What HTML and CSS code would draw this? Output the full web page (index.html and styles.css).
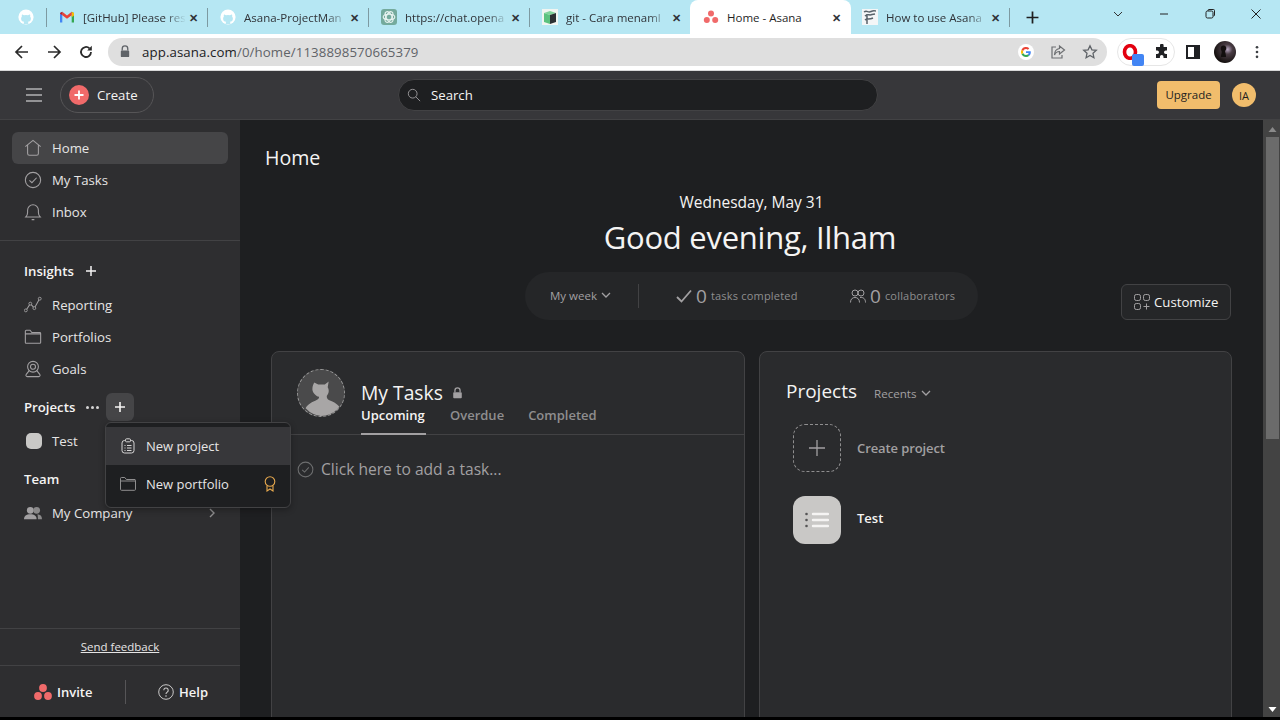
FILE: index.html
```html
<!DOCTYPE html>
<html lang="en">
<head>
  <meta charset="UTF-8">
  <title>Home - Asana</title>
  <link rel="stylesheet" href="styles.css">
</head>
<body>

  <!-- BROWSER TAB STRIP -->
  <div class="tabstrip">
    <div class="tab tab-pinned">
      <svg class="fav" viewBox="0 0 16 16"><circle cx="8" cy="8" r="7.6" fill="#fff"/><path d="M5.6 15c.1-1 .2-1.700.5-2.200-1.800-.2-3-1.100-3-3.300 0-.8.3-1.500.8-2-.1-.3-.3-1 .1-2 0 0 .7-.2 2.100.8a7 7 0 0 1 3.800 0c1.400-1 2.100-.8 2.100-.8.400 1 .2 1.700.1 2 .5.500.8 1.200.8 2 0 2.200-1.200 3.100-3 3.300.3.400.5 1 .5 2.200z" fill="#b6e7f3"/></svg>
    </div>
    <div class="tab">
      <svg class="fav" viewBox="0 0 16 16"><path d="M1 13.500V4l2.300-1.200V13.500z" fill="#4285f4"/><path d="M12.700 13.500V2.800L15 4v9.500z" fill="#34a853"/><path d="M12.700 2.800 15 4v2.500l-2.300 1.700z" fill="#fbbc04"/><path d="M3.300 2.800 8 6.400l4.700-3.600v3.400L8 9.800 3.300 6.200z" fill="#ea4335"/><path d="M1 4 3.300 2.800v3.400L1 4.600z" fill="#c5221f"/></svg>
      <span class="tab-title">[GitHub] Please res</span>
      <span class="tab-x">✕</span>
    </div>
    <div class="tab">
      <svg class="fav" viewBox="0 0 16 16"><circle cx="8" cy="8" r="7.6" fill="#fff"/><path d="M5.6 15c.1-1 .2-1.700.5-2.200-1.800-.2-3-1.100-3-3.300 0-.8.3-1.500.8-2-.1-.3-.3-1 .1-2 0 0 .7-.2 2.100.8a7 7 0 0 1 3.800 0c1.400-1 2.100-.8 2.100-.8.400 1 .2 1.700.1 2 .5.500.8 1.200.8 2 0 2.200-1.200 3.100-3 3.300.3.400.5 1 .5 2.200z" fill="#b6e7f3"/></svg>
      <span class="tab-title">Asana-ProjectMan</span>
      <span class="tab-x">✕</span>
    </div>
    <div class="tab">
      <svg class="fav" viewBox="0 0 16 16"><rect width="16" height="16" rx="3" fill="#74aa9c"/><g fill="none" stroke="#e8f3f0" stroke-width="1.100"><ellipse cx="8" cy="8" rx="5.800" ry="2.800"/><ellipse cx="8" cy="8" rx="5.800" ry="2.800" transform="rotate(60 8 8)"/><ellipse cx="8" cy="8" rx="5.800" ry="2.800" transform="rotate(120 8 8)"/></g></svg>
      <span class="tab-title">https://chat.opena</span>
      <span class="tab-x">✕</span>
    </div>
    <div class="tab">
      <svg class="fav" viewBox="0 0 16 16"><rect width="16" height="16" fill="#f1f5f1"/><path d="M2 4 8 2l6 2-6 2z" fill="#7fd39a"/><path d="M2 4l6 2v9l-6-2z" fill="#5cc27f"/><path d="M14 4 8 6v9l6-2z" fill="#2c3033"/></svg>
      <span class="tab-title">git - Cara menaml</span>
      <span class="tab-x">✕</span>
    </div>
    <div class="tab tab-active">
      <svg class="fav" viewBox="0 0 16 16"><circle cx="8" cy="4.500" r="3" fill="#f06a6a"/><circle cx="3.800" cy="11" r="3" fill="#f06a6a"/><circle cx="12.200" cy="11" r="3" fill="#f06a6a"/></svg>
      <span class="tab-title tab-title-full">Home - Asana</span>
      <span class="tab-x">✕</span>
    </div>
    <div class="tab tab-last">
      <svg class="fav" viewBox="0 0 16 16"><rect width="16" height="16" fill="#f4f6f7"/><path d="M2 3c3-2 4 1 7-.5S13 2 14 2M3 7c3-3 4 0 7-1.500l3-.5M5 5v10M3 11c2-2 4 0 8-2" fill="none" stroke="#59636b" stroke-width="1.500"/></svg>
      <span class="tab-title">How to use Asana</span>
      <span class="tab-x">✕</span>
    </div>
    <svg class="newtab" viewBox="0 0 12 12"><path d="M6 .5v11M.5 6h11" stroke="#1f1f1f" stroke-width="1.600"/></svg>
    <div class="win-btns">
      <svg viewBox="0 0 12 12"><path d="M2 4l4 4 4-4" fill="none" stroke="#333" stroke-width="1"/></svg>
      <svg viewBox="0 0 12 12"><path d="M2 6h8" stroke="#222" stroke-width="1"/></svg>
      <svg viewBox="0 0 12 12"><rect x="2" y="3" width="7" height="7" rx="1.500" fill="none" stroke="#222"/><path d="M4 3V2.500A1 1 0 0 1 5 1.500h4.500a1 1 0 0 1 1 1V7a1 1 0 0 1-1 1" fill="none" stroke="#222"/></svg>
      <svg viewBox="0 0 12 12"><path d="M1.500 1.500l9 9M10.500 1.500l-9 9" stroke="#222" stroke-width="1"/></svg>
    </div>
  </div>

  <!-- BROWSER TOOLBAR -->
  <div class="toolbar">
    <svg class="tool" viewBox="0 0 16 16"><path d="M14 8H2.500M8 2 2 8l6 6" fill="none" stroke="#2b2b2b" stroke-width="1.700"/></svg>
    <svg class="tool" viewBox="0 0 16 16"><path d="M2 8h11.500M8 2l6 6-6 6" fill="none" stroke="#2b2b2b" stroke-width="1.700"/></svg>
    <svg class="tool" viewBox="0 0 16 16"><path d="M13 8a5 5 0 1 1-1.500-3.600" fill="none" stroke="#2b2b2b" stroke-width="1.800"/><path d="M13.800 1.800v4.600H9.200z" fill="#2b2b2b"/></svg>
    <div class="omnibox">
      <svg class="lock" viewBox="0 0 12 14"><path d="M3 6V4a3 3 0 0 1 6 0v2" fill="none" stroke="#5f6368" stroke-width="1.400"/><rect x="1.500" y="6" width="9" height="7" rx="1" fill="#5f6368"/></svg>
      <span class="url"><b>app.asana.com</b>/0/home/1138898570665379</span>
      <svg class="omni-icon" viewBox="0 0 16 16"><circle cx="8" cy="8" r="8" fill="#fff"/><path d="M12.800 8.200c0-.4 0-.7-.1-1H8v1.900h2.700c-.1.600-.5 1.200-1 1.500l1.600 1.200c1-.9 1.500-2.200 1.500-3.600z" fill="#4285f4"/><path d="M8 13c1.300 0 2.400-.4 3.300-1.200l-1.600-1.200c-.5.300-1 .5-1.700.5-1.300 0-2.400-.9-2.800-2L3.500 10.300C4.300 11.900 6 13 8 13z" fill="#34a853"/><path d="M5.200 9.100a3 3 0 0 1 0-2.200L3.500 5.700a5 5 0 0 0 0 4.600z" fill="#fbbc04"/><path d="M8 5c.7 0 1.400.3 1.900.7l1.400-1.400A5 5 0 0 0 3.500 5.700l1.700 1.200C5.600 5.800 6.700 5 8 5z" fill="#ea4335"/></svg>
      <svg class="omni-icon" viewBox="0 0 16 16"><path d="M6 3H2v11h10v-3" fill="none" stroke="#6d6f72" stroke-width="1.200"/><path d="M9.500 2l5 4-5 4V7.500C7 7.500 5.500 8.500 4.500 11c0-4 2-6 5-6.500z" fill="none" stroke="#6d6f72" stroke-width="1.200"/></svg>
      <svg class="omni-icon" viewBox="0 0 16 16"><path d="M8 1.800l1.900 4 4.400.5-3.300 3 .9 4.400L8 11.500l-3.900 2.200.9-4.400-3.300-3 4.400-.5z" fill="none" stroke="#5f6368" stroke-width="1.300"/></svg>
    </div>
    <div class="ext-group">
      <span class="ext-opera">
        <svg viewBox="0 0 16 16"><ellipse cx="8" cy="8" rx="5.500" ry="6.300" fill="#fff" stroke="#e3000f" stroke-width="3.600"/></svg>
        <span class="ext-badge"></span>
      </span>
      <svg class="ext-puzzle" viewBox="0 0 16 16"><path d="M6 1.500a1.800 1.800 0 0 1 3.600 0V3H13v3.400h-1.200a1.800 1.800 0 0 0 0 3.600H13v4H9.500v-1.200a1.800 1.800 0 0 0-3.600 0V14H2v-4h1.200a1.800 1.800 0 0 0 0-3.600H2V3h4z" fill="#202124"/></svg>
    </div>
    <svg class="side-panel" viewBox="0 0 14 14"><path d="M1 1h12v12H1z" fill="none" stroke="#202124" stroke-width="2"/><rect x="8" y="1" width="5" height="12" fill="#202124"/></svg>
    <svg class="profile" viewBox="0 0 22 22">
      <defs><radialGradient id="profileGlow" cx=".62" cy=".38" r=".62"><stop offset="0" stop-color="#b9a9c4"/><stop offset=".35" stop-color="#4a3d45"/><stop offset="1" stop-color="#15100f"/></radialGradient></defs>
      <circle cx="11" cy="11" r="11" fill="url(#profileGlow)"/>
      <path d="M7 6c1-2 4-2 5 0 .7 1.500 0 3-1 4 0 1.500 1 3 1 6H7c0-3 1-4 .5-6C6.800 9 6.500 7 7 6z" fill="#120e0e"/>
    </svg>
    <svg class="kebab" viewBox="0 0 4 16"><circle cx="2" cy="2.500" r="1.500"/><circle cx="2" cy="8" r="1.500"/><circle cx="2" cy="13.500" r="1.500"/></svg>
  </div>

  <!-- ASANA TOP BAR -->
  <header class="topbar">
    <svg class="burger" viewBox="0 0 16 14"><path d="M0 1h16M0 7h16M0 13h16" stroke="#f0f0f0" stroke-width="1"/></svg>
    <div class="create-btn">
      <span class="create-dot"><svg viewBox="0 0 10 10"><path d="M5 .5v9M.5 5h9" stroke="#fff" stroke-width="1.800"/></svg></span>
      Create
    </div>
    <div class="search">
      <svg viewBox="0 0 16 16"><circle cx="6.500" cy="6.500" r="5" fill="none" stroke="#a2a0a2" stroke-width="1"/><path d="M10 10l5 5" stroke="#a2a0a2" stroke-width="1"/></svg>
      Search
    </div>
    <div class="upgrade">Upgrade</div>
    <div class="avatar-ia">IA</div>
  </header>

  <div class="app">
    <!-- SIDEBAR -->
    <aside class="sidebar">
      <nav class="nav-top">
        <div class="nav-row nav-active">
          <svg class="nav-icon" viewBox="0 0 20 20"><path d="M1.500 8.500 10 1.500l8.500 7M4 7v9a2 2 0 0 0 2 2h8a2 2 0 0 0 2-2V7" fill="none" stroke="#a2a0a2" stroke-width="1.200"/></svg>
          Home
        </div>
        <div class="nav-row">
          <svg class="nav-icon" viewBox="0 0 20 20"><circle cx="10" cy="10" r="8.500" fill="none" stroke="#a2a0a2" stroke-width="1.200"/><path d="M6 10.300l2.800 2.700L14 7.500" fill="none" stroke="#a2a0a2" stroke-width="1.200"/></svg>
          My Tasks
        </div>
        <div class="nav-row">
          <svg class="nav-icon" viewBox="0 0 20 20"><path d="M2 15.500c1.500-1.500 2-3 2-5V8a6 6 0 0 1 12 0v2.500c0 2 .5 3.500 2 5zM8.500 18.500h3" fill="none" stroke="#a2a0a2" stroke-width="1.200"/></svg>
          Inbox
        </div>
      </nav>

      <div class="nav-section">
        <div class="nav-head">
          <span>Insights</span>
          <svg class="head-plus" viewBox="0 0 10 10"><path d="M5 0v10M0 5h10" stroke="#f5f4f3" stroke-width="1.500"/></svg>
        </div>
        <div class="nav-row">
          <svg class="nav-icon" viewBox="0 0 20 20"><path d="M2.500 15.500 7 8.500l4.500 5 5.500-10" fill="none" stroke="#a2a0a2" stroke-width="1.200"/><circle cx="2" cy="16" r="1.600" fill="#2e2e30" stroke="#a2a0a2"/><circle cx="7" cy="8.500" r="1.600" fill="#2e2e30" stroke="#a2a0a2"/><circle cx="11.500" cy="13.500" r="1.600" fill="#2e2e30" stroke="#a2a0a2"/><circle cx="17.500" cy="3" r="1.600" fill="#2e2e30" stroke="#a2a0a2"/></svg>
          Reporting
        </div>
        <div class="nav-row">
          <svg class="nav-icon" viewBox="0 0 20 20"><path d="M1.500 3.500a1 1 0 0 1 1-1h4.200l2 2.500H17.500a1 1 0 0 1 1 1V16a1 1 0 0 1-1 1h-15a1 1 0 0 1-1-1zM1.500 6.500h17" fill="none" stroke="#a2a0a2" stroke-width="1.200"/></svg>
          Portfolios
        </div>
        <div class="nav-row">
          <svg class="nav-icon" viewBox="0 0 20 20"><circle cx="10" cy="7.500" r="6" fill="none" stroke="#a2a0a2" stroke-width="1.200"/><circle cx="10" cy="7.500" r="2.800" fill="none" stroke="#a2a0a2" stroke-width="1.200"/><path d="M6 11.500 2.500 16a1.500 1.500 0 0 0 1.200 2.500h12.600a1.500 1.500 0 0 0 1.200-2.500L14 11.500" fill="none" stroke="#a2a0a2" stroke-width="1.200"/></svg>
          Goals
        </div>
      </div>

      <div class="nav-head nav-head-projects">
        <span>Projects</span>
        <span class="dots"><i></i><i></i><i></i></span>
        <span class="plus-box"><svg viewBox="0 0 10 10"><path d="M5 0v10M0 5h10" stroke="#f5f4f3" stroke-width="1.600"/></svg></span>
        <!-- dropdown -->
        <div class="menu">
          <div class="menu-item menu-hover">
            <svg class="menu-icon" viewBox="0 0 16 16"><rect x="2" y="2.500" width="12" height="12.500" rx="2.500" fill="none" stroke="#d5d4d4" stroke-width="1"/><rect x="5.500" y=".8" width="5" height="3" rx="1" fill="#37373a" stroke="#d5d4d4" stroke-width="1"/><path d="M4.500 7.500h1M7 7.500h4.500M4.500 10h1M7 10h4.500M4.500 12.500h1M7 12.500h4.500" stroke="#d5d4d4" stroke-width="1"/></svg>
            New project
          </div>
          <div class="menu-item">
            <svg class="menu-icon" viewBox="0 0 16 16"><path d="M.5 2.500a1 1 0 0 1 1-1h3.300l1.600 2h8.600a.8.800 0 0 1 .5.800v9a1 1 0 0 1-1 1H1.500a1 1 0 0 1-1-1zM.5 5h15" fill="none" stroke="#8f8e8f" stroke-width="1"/></svg>
            New portfolio
            <svg class="menu-award" viewBox="0 0 12 16"><circle cx="6" cy="5.500" r="4.800" fill="none" stroke="#e8a94e" stroke-width="1.100"/><path d="M3 9.500V15l3-2 3 2V9.500" fill="none" stroke="#e8a94e" stroke-width="1.100"/></svg>
          </div>
        </div>
      </div>
      <div class="nav-row">
        <span class="swatch"></span>
        Test
      </div>

      <div class="nav-head nav-head-team"><span>Team</span></div>
      <div class="nav-row">
        <svg class="nav-icon" viewBox="0 0 20 20"><circle cx="7" cy="7" r="3.800" fill="#a2a0a2"/><circle cx="14" cy="7" r="3.800" fill="#8a898a"/><path d="M0 17c0-3.500 2.500-5.500 7-5.500s7 2 7 5.500z" fill="#a2a0a2"/><path d="M15 11.500c3 .2 5 2 5 5.500h-4.500c0-2-.2-3.800-.5-5.500z" fill="#8a898a"/></svg>
        My Company
        <svg class="chev" viewBox="0 0 8 12"><path d="M2 2l4 4-4 4" fill="none" stroke="#8f8e8f" stroke-width="1.400"/></svg>
      </div>

      <div class="side-foot">
        <div class="feedback"><a>Send feedback</a></div>
        <div class="foot-btns">
          <div class="foot-btn foot-invite">
            <svg viewBox="0 0 18 16"><circle cx="9" cy="4" r="3.900" fill="#f06a6a"/><circle cx="4" cy="12" r="3.900" fill="#f06a6a"/><circle cx="14" cy="12" r="3.900" fill="#f06a6a"/></svg>
            Invite
          </div>
          <div class="foot-btn foot-help">
            <svg viewBox="0 0 16 16"><circle cx="8" cy="8" r="7.300" fill="none" stroke="#c9c8c8" stroke-width="1"/><path d="M5.800 6.200a2.200 2.200 0 1 1 3.400 1.900c-.8.500-1.200.9-1.200 1.900" fill="none" stroke="#c9c8c8" stroke-width="1.100"/><circle cx="8" cy="12" r=".8" fill="#c9c8c8"/></svg>
            Help
          </div>
        </div>
      </div>
    </aside>

    <!-- MAIN -->
    <main class="main">
      <div class="main-scroll">
        <h2 class="page-title">Home</h2>
        <div class="date">Wednesday, May 31</div>
        <h1 class="greeting">Good evening, Ilham</h1>

        <div class="stats-row">
          <div class="stats">
            <span class="stats-week">My week
              <svg viewBox="0 0 10 6"><path d="M1 1l4 4 4-4" fill="none" stroke="#a2a0a2" stroke-width="1.300"/></svg>
            </span>
            <span class="stats-div"></span>
            <span class="stat stat-tasks">
              <svg viewBox="0 0 16 14"><path d="M1 8l4.500 4.500L15 1.500" fill="none" stroke="#a2a0a2" stroke-width="1.800"/></svg>
              <b>0</b><small>tasks completed</small>
            </span>
            <span class="stat stat-coll">
              <svg viewBox="0 0 16 14"><circle cx="5" cy="4" r="3" fill="none" stroke="#a2a0a2"/><circle cx="11" cy="4" r="3" fill="none" stroke="#a2a0a2"/><path d="M.5 13.500c0-3.500 2-5 4.500-5s4.500 1.500 4.500 5M10 8.500c3.500-.5 5.500 1.500 5.500 5" fill="none" stroke="#a2a0a2"/></svg>
              <b>0</b><small>collaborators</small>
            </span>
          </div>
          <div class="customize">
            <svg viewBox="0 0 16 16"><rect x=".5" y=".5" width="6" height="6" rx="1.800" fill="none" stroke="#a2a0a2"/><rect x="9.500" y=".5" width="6" height="6" rx="1.800" fill="none" stroke="#a2a0a2"/><rect x=".5" y="9.500" width="6" height="6" rx="1.800" fill="none" stroke="#a2a0a2"/><path d="M12.500 9.500v6M9.500 12.500h6" stroke="#a2a0a2"/></svg>
            Customize
          </div>
        </div>

        <div class="cards">
          <section class="card">
            <div class="tasks-head">
              <div class="user-pic">
                <svg viewBox="0 0 48 48"><path d="M17 13l4 2h7l4-3-1 6c2 3 1 7-1 9 0 3 1 4 4 5 5 2 9 5 10 8a24 24 0 0 1-36 0c1-3 5-6 10-8 3-1 4-2 4-4-4-1-7-5-7-8 0-3 1-6 3-8z" fill="#a8a6a6"/></svg>
              </div>
              <div class="tasks-titles">
                <div class="tasks-title">My Tasks
                  <svg viewBox="0 0 12 14"><path d="M3 6V4a3 3 0 0 1 6 0v2" fill="none" stroke="#a2a0a2" stroke-width="1.500"/><rect x="1" y="6" width="10" height="7" rx="1" fill="#a2a0a2"/></svg>
                </div>
                <div class="tasks-tabs">
                  <span class="tasks-tab tasks-tab-on">Upcoming</span>
                  <span class="tasks-tab">Overdue</span>
                  <span class="tasks-tab">Completed</span>
                </div>
              </div>
            </div>
            <div class="add-task">
              <svg viewBox="0 0 18 18"><circle cx="9" cy="9" r="7.800" fill="none" stroke="#6d6e6f" stroke-width="1.100"/><path d="M5.500 9.300 8 11.700l4.500-5" fill="none" stroke="#6d6e6f" stroke-width="1.100"/></svg>
              Click here to add a task...
            </div>
          </section>

          <section class="card card-projects">
            <div class="proj-head">
              <span class="proj-title">Projects</span>
              <span class="proj-filter">Recents
                <svg viewBox="0 0 10 6"><path d="M1 1l4 4 4-4" fill="none" stroke="#a2a0a2" stroke-width="1.300"/></svg>
              </span>
            </div>
            <div class="proj-row">
              <span class="proj-new"><svg viewBox="0 0 16 16"><path d="M8 0v16M0 8h16" stroke="#a2a0a2" stroke-width="1.300"/></svg></span>
              <span class="proj-create">Create project</span>
            </div>
            <div class="proj-row">
              <span class="proj-tile">
                <svg viewBox="0 0 24 16"><g fill="#555"><circle cx="1.500" cy="2" r="1.300"/><circle cx="1.500" cy="8" r="1.300"/><circle cx="1.500" cy="14" r="1.300"/></g><path d="M8 2h15M8 8h15M8 14h15" stroke="#f5f4f3" stroke-width="2.400" stroke-linecap="round"/></svg>
              </span>
              <span class="proj-name">Test</span>
            </div>
          </section>
        </div>
      </div>

      <div class="scrollbar">
        <svg class="scroll-arrow" viewBox="0 0 8 5"><path d="M4 0l4 5H0z" fill="#8a8a8a"/></svg>
        <div class="scroll-thumb"></div>
        <svg class="scroll-arrow scroll-arrow-down" viewBox="0 0 8 5"><path d="M4 5l4-5H0z" fill="#fff"/></svg>
      </div>
    </main>
  </div>

</body>
</html>
```

FILE: styles.css
```css
* { box-sizing:border-box; }
html, body { margin:0; height:100%; }
body {
  width:1280px; height:720px; overflow:hidden;
  display:flex; flex-direction:column; background:#000;
  font-family:'Open Sans','Noto Sans',sans-serif; color:#f5f4f3;
}
svg { display:block; flex:none; }

/* Browser tabs */
.tabstrip {
  height:34px; background:#b6e7f3; display:flex; align-items:center;
  padding-left:6px; flex:none;
}
.tab {
  width:161px; height:34px; display:flex; align-items:center; position:relative;
  padding-left:12px; padding-right:8px; font-size:11.5px; color:#303338;
}
.tab::after {
  content:''; position:absolute; right:0; top:8px; height:19px; width:1px; background:#7d9aa1;
}
.tab-pinned { width:41px; }
.tab-active {
  background:#fff; border-radius:8px 8px 0 0; padding-left:13px; margin-left:-1px;
  color:#1f1f1f;
}
.tab-active::after { display:none; }
.tab-last { width:159px; padding-left:11px; }
.fav { width:16px; height:16px; margin-right:8px; }
.tab-title {
  flex:1; min-width:0; white-space:nowrap;
  -webkit-mask-image:linear-gradient(90deg,#000 80%,transparent 100%);
  mask-image:linear-gradient(90deg,#000 80%,transparent 100%);
}
.tab-title-full { -webkit-mask-image:none; mask-image:none; }
.tab-x { width:14px; font-size:11px; font-weight:700; text-align:center; color:#2f3337; }
.newtab { width:13px; height:13px; margin-left:16px; }
.win-btns { margin-left:auto; display:flex; align-items:center; margin-right:18px; gap:34px; margin-top:-6px; }
.win-btns svg { width:12px; height:12px; }

/* Browser toolbar */
.toolbar {
  height:37px; background:#fff; display:flex; align-items:center; flex:none;
  padding:0 0 1px 14px; border-bottom:1px solid #d8d8d8;
}
.tool { width:16px; height:16px; margin-right:16px; }
.omnibox {
  width:999px; height:28px; margin-left:-2px; background:#dfdfdf; border-radius:14px;
  display:flex; align-items:center; padding:0 9px 0 11px; color:#5f6368;
}
.lock { width:12px; height:13px; margin-right:11px; }
.url { flex:1; font-size:13.25px; letter-spacing:.1px; }
.url b { font-weight:400; color:#202124; }
.omni-icon { width:16px; height:16px; margin-left:16px; }
.ext-group {
  width:58px; height:28px; border:1px solid #e6e6e6; border-radius:14px; margin-left:10px;
  display:flex; align-items:center; padding-left:4px; gap:16px;
}
.ext-opera { position:relative; width:16px; height:16px; }
.ext-opera svg { width:16px; height:16px; }
.ext-badge { position:absolute; right:-6px; bottom:-6px; width:12px; height:12px; background:#4285f4; border-radius:2px; }
.ext-puzzle { width:16px; height:16px; }
.side-panel { width:14px; height:14px; margin-left:11px; }
.profile { width:22px; height:22px; margin-left:14px; }
.kebab { width:4px; height:14px; fill:#3c3f43; margin-left:19px; }

/* Asana top bar */
.topbar {
  height:49px; background:#37373a; border-bottom:1px solid #424244; display:flex; align-items:center; flex:none;
  padding:0 24px 0 26px;
}
.burger { width:16px; height:14px; }
.create-btn {
  margin-left:18px; width:94px; height:36px; border:1px solid #565557; border-radius:18px;
  display:flex; align-items:center; font-size:13.2px; padding-left:8px; gap:8px;
}
.create-dot {
  width:20px; height:20px; border-radius:50%; background:#f06a6a;
  display:flex; align-items:center; justify-content:center;
}
.create-dot svg { width:10px; height:10px; }
.search {
  margin-left:244px; width:480px; height:32px; background:#1e1f21; border:1px solid #424244;
  border-radius:16px; display:flex; align-items:center; padding-left:8px; font-size:13.2px; gap:10px;
}
.search svg { width:14px; height:14px; }
.upgrade {
  margin-left:auto; width:63px; height:28px; padding-bottom:1px; background:#f1bd6c; border-radius:4px; color:#1e1f21;
  font-size:11.5px; display:flex; align-items:center; justify-content:center;
}
.avatar-ia {
  margin-left:12px; width:24px; height:24px; border-radius:50%; background:#f1bd6c; color:#1e1f21;
  font-size:11px; display:flex; align-items:center; justify-content:center;
}

/* Layout */
.app { flex:1; min-height:0; display:flex; margin-bottom:3px; }

/* Sidebar */
.sidebar {
  width:240px; flex:none; background:#2e2e30;
  display:flex; flex-direction:column; font-size:13.2px;
}
.nav-top { padding:12px; border-bottom:1px solid #424244; }
.nav-row {
  height:32px; display:flex; align-items:center; gap:10px; padding:0 0 1px 12px;
  margin:0 12px; color:#e6e5e5; border-radius:6px; position:relative;
}
.nav-top .nav-row { margin:0; }
.nav-active { background:#454547; }
.nav-icon { width:18px; height:18px; margin-top:1px; }
.nav-section { padding-top:14px; }
.nav-head {
  height:32px; display:flex; align-items:center; padding:0 0 1px 24px; font-weight:600;
  color:#f5f4f3; position:relative;
}
.nav-section .nav-head { margin-bottom:2px; }
.head-plus { width:10px; height:10px; margin-left:12px; margin-top:1px; }
.nav-head-projects { margin-top:8px; margin-bottom:4px; height:28px; padding-bottom:0; }
.nav-head-team { margin-top:6px; margin-bottom:2px; }
.dots { display:flex; gap:2px; margin-left:11px; }
.dots i { width:3px; height:3px; border-radius:50%; background:#d5d4d4; }
.plus-box {
  width:28px; height:28px; margin-left:7px; border-radius:6px; background:#454547;
  display:flex; align-items:center; justify-content:center;
}
.plus-box svg { width:10px; height:10px; }
.swatch { width:16px; height:16px; border-radius:5px; background:#c9c8c6; margin:1px 0 0 2px; }
.chev { width:8px; height:12px; position:absolute; right:12px; top:10px; }

/* Dropdown */
.menu {
  position:absolute; left:105px; top:29px; width:186px; height:86px; z-index:5;
  background:#1e1f21; border:1px solid #424244; border-radius:6px; padding-top:4px;
  font-weight:400; font-size:13px; box-shadow:0 2px 6px rgba(0,0,0,.3);
}
.menu-item { height:38px; display:flex; align-items:center; padding:0 0 1px 14px; gap:10px; color:#e6e5e5; position:relative; }
.menu-hover { background:#37373a; }
.menu-icon { width:16px; height:16px; }
.menu-award { width:12px; height:16px; position:absolute; right:14px; top:11px; }

.side-foot { margin-top:auto; }
.feedback {
  height:38px; padding-bottom:2px; border-top:1px solid #424244; border-bottom:1px solid #424244;
  display:flex; align-items:center; justify-content:center; font-size:11.5px; color:#e6e5e5;
}
.feedback a { text-decoration:underline; }
.foot-btns { height:51px; display:flex; align-items:center; font-weight:600; font-size:13px; }
.foot-btn { height:24px; display:flex; align-items:center; gap:5px; }
.foot-invite { width:126px; padding-left:34px; border-right:1px solid #565557; }
.foot-invite svg { width:18px; height:16px; }
.foot-help { padding-left:32px; }
.foot-help svg { width:16px; height:16px; }

/* Main */
.main { flex:1; min-width:0; background:#1e1f21; display:flex; overflow:hidden; }
.main-scroll { flex:1; min-width:0; padding:0 31px; position:relative; }
.page-title { margin:25px 0 0 -6px; font-size:19.6px; font-weight:400; line-height:26px; color:#f5f4f3; }
.date { margin-top:21px; text-align:center; font-size:15.5px; line-height:20px; }
.greeting { margin:4px 0 0 -3px; text-align:center; font-size:31px; letter-spacing:-.25px; font-weight:400; line-height:42px; }
.stats-row { display:grid; grid-template-columns:1fr auto 1fr; align-items:end; margin-top:14px; }
.stats {
  grid-column:2; width:453px; height:48px; background:#252628; border-radius:24px;
  display:flex; align-items:center; padding-left:25px; color:#a2a0a2; font-size:11.5px;
}
.stats-week { display:flex; align-items:center; gap:4px; width:88px; margin-top:-2px; }
.stats-week svg { width:10px; height:6px; }
.stats-div { width:1px; height:24px; background:#424244; }
.stat { display:flex; align-items:center; }
.stat b { font-weight:400; font-size:19px; margin:0 4px; }
.stat small { font-size:11px; letter-spacing:.2px; color:#8f8e8f; margin-top:-2px; }
.stat svg { width:16px; height:14px; }
.stat-tasks { margin-left:37px; width:174px; }
.customize {
  grid-column:3; justify-self:end; width:110px; height:36px; border:1px solid #424244; border-radius:6px;
  background:#252628; display:flex; align-items:center; padding-left:12px; gap:4px; font-size:13.2px;
  margin-right:1px;
}
.customize svg { width:16px; height:16px; }

.cards { display:grid; grid-template-columns:474px 473px; gap:14px; margin-top:31px; }
.card { height:420px; background:#2a2b2d; border:1px solid #424244; border-radius:8px; }
.tasks-head { display:flex; padding:17px 0 0 25px; height:83px; border-bottom:1px solid #424244; }
.user-pic { width:48px; height:48px; border-radius:50%; background:#4a4a4b; border:1px dashed #9a9a9a; overflow:hidden; }
.user-pic svg { width:46px; height:46px; }
.tasks-titles { margin-left:16px; }
.tasks-title { display:flex; align-items:center; gap:9px; font-size:19.3px; line-height:26px; margin-top:11px; }
.tasks-title svg { width:11px; height:12px; }
.tasks-tabs { display:flex; gap:24px; font-size:13px; font-weight:600; color:#8f8e8f; margin-top:-1px; }
.tasks-tab { height:30px; line-height:20px; }
.tasks-tab-on { width:65px; color:#f5f4f3; border-bottom:2px solid #a2a0a2; }
.add-task { display:flex; align-items:center; gap:7px; padding:23px 0 0 25px; font-size:15.6px; color:#a2a0a2; }
.add-task svg { width:17px; height:17px; }

.proj-head { display:flex; align-items:center; padding:26px 0 0 26px; }
.proj-title { font-size:19px; line-height:26px; }
.proj-filter { display:flex; align-items:center; gap:4px; font-size:11.6px; color:#a2a0a2; margin-left:17px; margin-top:4px; }
.proj-filter svg { width:10px; height:6px; }
.proj-row { display:flex; align-items:center; gap:16px; padding-left:33px; height:48px; margin-top:24px; font-size:13px; }
.proj-row:nth-child(2) { margin-top:20px; }
.proj-new {
  width:48px; height:48px; border:1px dashed #8f8e8f; border-radius:12px;
  display:flex; align-items:center; justify-content:center;
}
.proj-new svg { width:16px; height:16px; }
.proj-create { color:#a2a0a2; font-weight:600; letter-spacing:-.1px; }
.proj-tile {
  width:48px; height:48px; background:#c9c8c6; border-radius:12px;
  display:flex; align-items:center; justify-content:center;
}
.proj-tile svg { width:24px; height:16px; }
.proj-name { font-weight:600; margin-top:-4px; }

.scrollbar { width:17px; flex:none; background:#434343; padding:7px 0 5px 1px; display:flex; flex-direction:column; align-items:center; }
.scroll-arrow { width:9px; height:5px; }
.scroll-thumb { width:13px; height:302px; margin-top:5px; background:#6b6b6b; }
.scroll-arrow-down { margin-top:auto; }
```
